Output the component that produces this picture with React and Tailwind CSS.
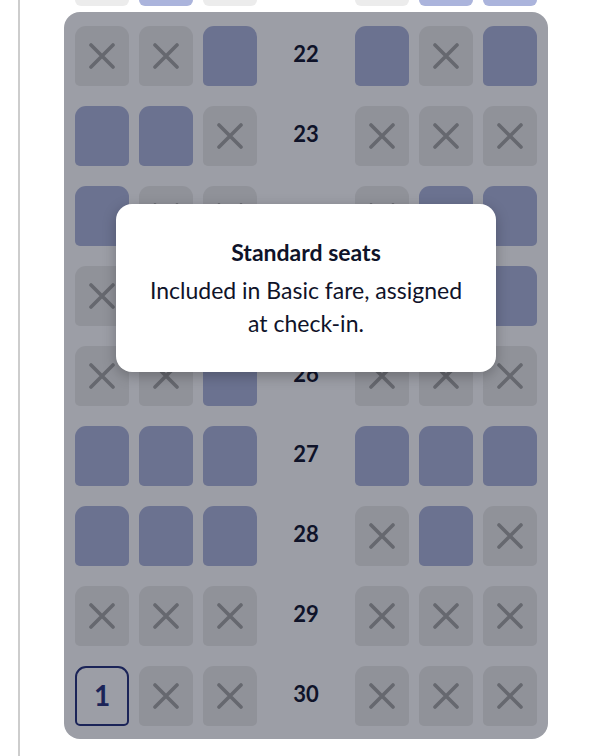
import React from "react";

// a = available, x = taken, s = selected (label shown)
const ROWS = [
  { num: 22, left: ["x", "x", "a"], right: ["a", "x", "a"] },
  { num: 23, left: ["a", "a", "x"], right: ["x", "x", "x"] },
  { num: 24, left: ["a", "x", "x"], right: ["x", "a", "a"] },
  { num: 25, left: ["x", "x", "x"], right: ["x", "a", "a"] },
  { num: 26, left: ["x", "x", "a"], right: ["x", "x", "x"] },
  { num: 27, left: ["a", "a", "a"], right: ["a", "a", "a"] },
  { num: 28, left: ["a", "a", "a"], right: ["x", "a", "x"] },
  { num: 29, left: ["x", "x", "x"], right: ["x", "x", "x"] },
  { num: 30, left: ["s", "x", "x"], right: ["x", "x", "x"] },
];

const CrossIcon = () => (
  <svg width="26" height="26" viewBox="0 0 26 26" fill="none">
    <path
      d="M2 2 L24 24 M24 2 L2 24"
      stroke="#66686f"
      strokeWidth="3.6"
      strokeLinecap="round"
    />
  </svg>
);

const Seat = ({ kind }) => {
  if (kind === "a") {
    return <div className="h-[60px] w-[54px] rounded-t-[11px] rounded-b-[5px] bg-[#6b7290]" />;
  }
  if (kind === "s") {
    return (
      <div className="flex h-[60px] w-[54px] items-center justify-center rounded-t-[11px] rounded-b-[5px] border-2 border-[#1b2458] pb-[2px] text-[28px] font-bold text-[#1b2458]">
        1
      </div>
    );
  }
  return (
    <div className="flex h-[60px] w-[54px] items-center justify-center rounded-t-[11px] rounded-b-[5px] bg-[#909299]">
      <CrossIcon />
    </div>
  );
};

const TopSeat = ({ blue }) => (
  <div
    className={`h-[60px] w-[54px] rounded-[6px] ${blue ? "bg-[#abb4dc]" : "bg-[#ececec]"}`}
  />
);

export default function App() {
  return (
    <div
      className="relative h-[756px] w-[592px] overflow-hidden bg-white"
      style={{ fontFamily: "Lato, 'Noto Sans', sans-serif" }}
    >
      <div className="ml-[18px] flex h-full border-l-2 border-[#cdcdcd] pl-[44px]">
        <div className="flex w-[484px] flex-col">
          <div className="-mt-[54px] flex px-[11px]">
            <div className="flex gap-[10px]">
              <TopSeat />
              <TopSeat blue />
              <TopSeat />
            </div>
            <div className="w-[98px]" />
            <div className="flex gap-[10px]">
              <TopSeat />
              <TopSeat blue />
              <TopSeat blue />
            </div>
          </div>

          <div className="mt-[6px] flex flex-col gap-5 rounded-2xl bg-[#9c9ea6] px-[11px] pb-[13px] pt-[14px]">
            {ROWS.map((row) => (
              <div key={row.num} className="flex items-center">
                <div className="flex gap-[10px]">
                  {row.left.map((k, i) => (
                    <Seat key={i} kind={k} />
                  ))}
                </div>
                <div className="w-[98px] pb-[5px] text-center text-[22px] font-bold text-[#0f1329]">
                  {row.num}
                </div>
                <div className="flex gap-[10px]">
                  {row.right.map((k, i) => (
                    <Seat key={i} kind={k} />
                  ))}
                </div>
              </div>
            ))}
          </div>
        </div>
      </div>

      <div className="absolute left-[116px] top-[204px] flex h-[168px] w-[380px] flex-col items-center justify-center rounded-2xl bg-white px-5 text-center text-[#0f1329] shadow-[0_4px_14px_rgba(0,0,0,0.25)]">
        <p className="text-[23px] font-bold leading-[30px]">Standard seats</p>
        <p className="mt-[7px] text-[23px] leading-[33px]">
          Included in Basic fare, assigned
          <br />
          at check-in.
        </p>
      </div>
    </div>
  );
}
